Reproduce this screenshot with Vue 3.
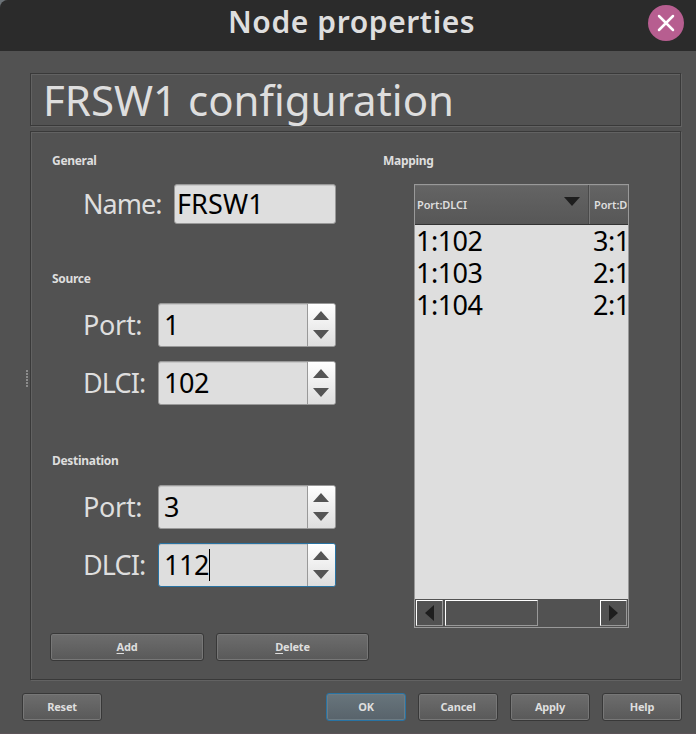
<script setup>
import { ref } from 'vue'

const name = ref('FRSW1')
const groups = ref([
  { title: 'Source', cls: 'source', port: '1', dlci: '102', focused: false },
  { title: 'Destination', cls: 'destination', port: '3', dlci: '112', focused: true },
])
const rows = [
  ['1:102', '3:1'],
  ['1:103', '2:1'],
  ['1:104', '2:1'],
]
</script>

<template>
  <div class="window">
    <header class="titlebar">
      <span class="title">Node properties</span>
      <button class="close" aria-label="Close">
        <svg width="36" height="36" viewBox="0 0 36 36">
          <path d="M11 11 L25 25 M25 11 L11 25" stroke="#fff" stroke-width="2.5" stroke-linecap="round" />
        </svg>
      </button>
    </header>

    <main class="body">
      <div class="splitter"></div>
      <div class="stack">
        <div class="frame heading"><span class="heading-text">FRSW1 configuration</span></div>
        <div class="frame content">
          <div class="left">
            <section class="group general">
              <h2>General</h2>
              <div class="field name-field">
                <label class="l-name">Name:</label>
                <div class="input"><span>{{ name }}</span></div>
              </div>
            </section>
            <section v-for="g in groups" :key="g.title" class="group" :class="g.cls">
              <h2>{{ g.title }}</h2>
              <div class="field">
                <label class="l-port">Port:</label>
                <div class="spin">
                  <span class="value">{{ g.port }}</span>
                  <div class="arrows">
                    <svg width="16" height="28" viewBox="0 0 16 28"><path d="M8 0 L16 9 H0 Z M0 19 H16 L8 28 Z" fill="#555" /></svg>
                  </div>
                </div>
              </div>
              <div class="field">
                <label class="l-dlci">DLCI:</label>
                <div class="spin" :class="{ focused: g.focused }">
                  <span class="value">{{ g.dlci }}</span><i v-if="g.focused" class="caret"></i>
                  <div class="arrows">
                    <svg width="16" height="28" viewBox="0 0 16 28"><path d="M8 0 L16 9 H0 Z M0 19 H16 L8 28 Z" fill="#555" /></svg>
                  </div>
                </div>
              </div>
            </section>
            <div class="actions">
              <button class="btn add"><span><u>A</u>dd</span></button>
              <button class="btn delete"><span><u>D</u>elete</span></button>
            </div>
          </div>
          <section class="right">
            <h2>Mapping</h2>
            <div class="table">
              <div class="thead">
                <div class="th first">
                  <span>Port:DLCI</span>
                  <svg width="16" height="9" viewBox="0 0 16 9"><path d="M0 0 H16 L8 9 Z" fill="#1e1e1e" /></svg>
                </div>
                <div class="th"><span>Port:D</span></div>
              </div>
              <div class="tbody">
                <div v-for="r in rows" :key="r[0]" class="tr">
                  <span class="td c1">{{ r[0] }}</span>
                  <span class="td">{{ r[1] }}</span>
                </div>
              </div>
              <div class="scrollbar">
                <div class="sb-btn"><svg width="9" height="16" viewBox="0 0 9 16"><path d="M9 0 V16 L0 8 Z" fill="#1e1e1e" /></svg></div>
                <div class="thumb"></div>
                <div class="sb-btn end"><svg width="9" height="16" viewBox="0 0 9 16"><path d="M0 0 V16 L9 8 Z" fill="#1e1e1e" /></svg></div>
              </div>
            </div>
          </section>
        </div>
      </div>
    </main>

    <footer class="footer">
      <button class="btn reset"><span>Reset</span></button>
      <button class="btn ok"><span>OK</span></button>
      <button class="btn"><span>Cancel</span></button>
      <button class="btn"><span>Apply</span></button>
      <button class="btn"><span>Help</span></button>
    </footer>
  </div>
</template>

<style>
body { background: #6b7277; }
</style>

<style scoped>
* { box-sizing: border-box; }
.window {
  width: 696px; height: 734px; overflow: hidden;
  display: flex; flex-direction: column;
  background: #525252; color: #dedede;
  border-radius: 8px 0 0 0;
  border-bottom: 1px solid #5b5357;
  font-family: "Noto Sans", "Open Sans", sans-serif;
}
.titlebar {
  height: 51px; flex: none; background: #2b2b2b;
  display: grid; grid-template-columns: 1fr auto; padding: 5px 12px 0 228px;
}
.title { font-size: 30px; line-height: 34px; font-weight: 600; letter-spacing: 0.58px; white-space: nowrap; }
.close { width: 36px; height: 36px; border: 0; padding: 0; border-radius: 50%; background: #b75e90; }
.close svg { display: block; }

.body { display: flex; padding: 22px 15px 0 26px; height: 629px; flex: none; }
.splitter {
  width: 2px; height: 17px; margin: 297px 2px 0 0;
  background: repeating-linear-gradient(#8c8c8c 0 2px, #525252 2px 3px);
}
.stack { display: flex; flex-direction: column; gap: 5px; width: 651px; }
.frame { border: 1px solid #393939; box-shadow: 1px 1px 0 #626262, inset 1px 1px 0 #626262; }
.heading { height: 53px; padding-left: 12px; display: flex; align-items: center; }
.heading-text { font-size: 42px; line-height: 50px; white-space: nowrap; }
.content { height: 549px; display: flex; padding: 19px 0 0 20px; }
.left { width: 332px; flex: none; padding-left: 1px; }
h2 { margin: 0; font-size: 12px; line-height: 20px; font-weight: 700; letter-spacing: -0.3px; white-space: nowrap; }
.general { height: 118px; }
.source, .destination { height: 182px; }
.field { display: flex; align-items: center; justify-content: space-between; width: 284px; height: 44px; margin-top: 14px; padding-left: 31px; }
.name-field { height: 40px; margin-top: 13px; }
label { white-space: nowrap; line-height: 40px; font-size: 27px; }
.l-name { letter-spacing: -1px; }
.l-port { letter-spacing: -0.3px; }
.l-dlci { letter-spacing: -0.9px; }
.input, .spin { background: #dedede; color: #000; border: 1px solid #999; border-radius: 3px; box-shadow: inset 0 1px 0 #c8c8c8; font-size: 27px; display: flex; align-items: center; }
.input { width: 162px; height: 40px; line-height: 36px; padding-left: 2px; letter-spacing: 0.1px; }
.spin { width: 178px; height: 44px; padding-left: 5px; line-height: 40px; overflow: hidden; letter-spacing: -0.5px; }
.spin.focused { border-color: #2873a3; }
.caret { width: 1px; height: 32px; background: #000; }
.arrows {
  margin-left: auto; width: 29px; height: 42px; border-left: 1px solid #999; margin-right: -1px;
  background: linear-gradient(#fff, #dedede); display: flex; align-items: center; justify-content: center;
}
.arrows svg { margin-right: 2px; }
.actions { display: flex; gap: 12px; margin-left: -2px; }
.btn {
  width: 80px; height: 28px; padding: 0; border: 1px solid #383838; border-radius: 3px;
  background: linear-gradient(#6d6d6d, #595959); box-shadow: inset 0 0 0 1px #777;
  color: #dedede; font: 700 11px/24px "Noto Sans", "Open Sans", sans-serif; letter-spacing: -0.2px;
}
.add { width: 154px; }
.delete { width: 153px; }
u { text-underline-offset: 2px; }

.table { margin: 13px 0 0 31px; width: 215px; height: 444px; border: 1px solid #999; background: #dedede; overflow: hidden; display: flex; flex-direction: column; }
.thead { height: 40px; flex: none; display: flex; background: linear-gradient(#646464, #575757); border-bottom: 1px solid #333; box-shadow: inset 0 1px 0 #6c6c6c; font-size: 11px; font-weight: 600; letter-spacing: -0.1px; line-height: 20px; }
.th { display: flex; align-items: center; flex: none; padding-left: 4px; white-space: nowrap; }
.th.first { width: 175px; padding: 0 9px 0 2px; justify-content: space-between; border-right: 1px solid #777; box-shadow: inset -1px 0 0 #4a4a4a; }
.th.first svg { margin-top: -7px; }
.tbody { flex: 1; color: #000; font-size: 27px; letter-spacing: -0.5px; }
.tr { display: flex; height: 32px; line-height: 32px; padding-left: 1px; }
.td { white-space: nowrap; flex: none; }
.c1 { width: 177px; }
.scrollbar { height: 28px; flex: none; background: #525252; padding: 1px 1px 0; display: flex; }
.sb-btn, .thumb { height: 26px; border: 1px solid; border-color: #fff #999 #999 #fff; display: flex; align-items: center; justify-content: center; }
.sb-btn { width: 27px; }
.thumb { width: 93px; margin-left: 2px; }
.end { margin-left: auto; }

.footer { display: flex; gap: 12px; padding: 13px 14px 0 22px; }
.reset { margin-right: auto; }
.ok { border-color: #2873a3; background: linear-gradient(#68757c, #58636b); box-shadow: inset 0 0 0 1px #6d7b83; }
</style>
